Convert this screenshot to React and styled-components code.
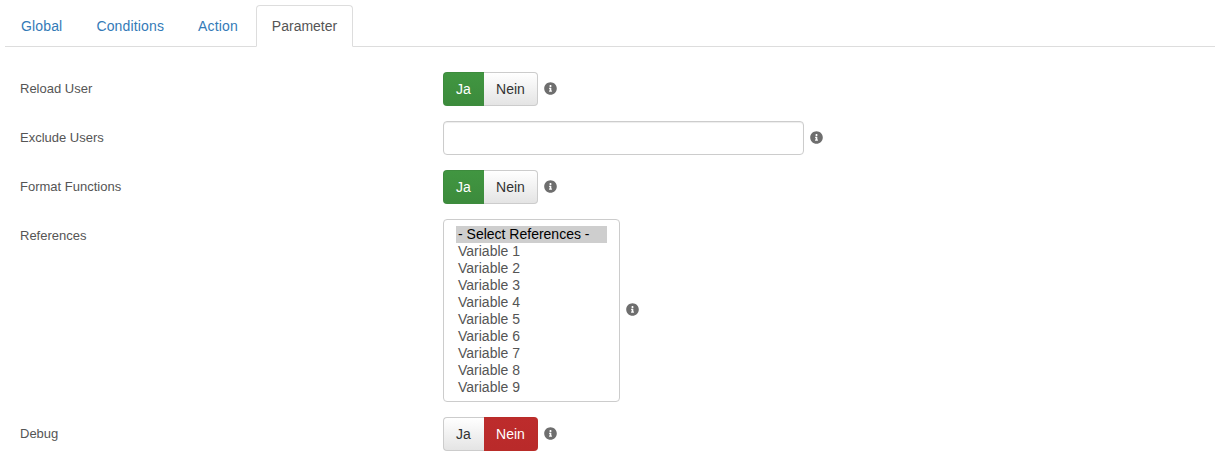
import React from "react";
import styled, { createGlobalStyle } from "styled-components";
import { FaInfoCircle } from "react-icons/fa";

const GlobalStyle = createGlobalStyle`
  body {
    margin: 0;
    background: #fff;
    font-family: "Liberation Sans", Arial, sans-serif;
    font-size: 14px;
    color: #555;
  }
`;

const Page = styled.div`
  padding-top: 5px;
`;

const Tabs = styled.ul`
  display: flex;
  gap: 2px;
  list-style: none;
  margin: 0 0 25px 5px;
  padding: 0;
  height: 41px;
  border-bottom: 1px solid #ddd;
`;

const Tab = styled.li`
  box-sizing: border-box;
  height: 42px;
  padding: 0 15px;
  line-height: 40px;
  letter-spacing: ${(p) => (p.$active ? "0" : "0.15px")};
  border: 1px solid ${(p) => (p.$active ? "#ddd" : "transparent")};
  border-bottom-color: ${(p) => (p.$active ? "#fff" : "transparent")};
  border-radius: 4px 4px 0 0;
  background: ${(p) => (p.$active ? "#fff" : "transparent")};
  color: ${(p) => (p.$active ? "#555" : "#337ab7")};
`;

const Form = styled.div`
  display: flex;
  flex-direction: column;
  gap: 15px;
  padding-left: 20px;
`;

const Row = styled.div`
  display: grid;
  grid-template-columns: 423px 1fr;
`;

const Label = styled.label`
  font-size: 13px;
  line-height: 33px;
  color: #555;
`;

const Control = styled.div`
  display: flex;
  align-items: center;
  gap: 6px;
`;

const Toggle = styled.div`
  display: flex;
  height: 34px;
`;

const colours = {
  green: "background: linear-gradient(#419641, #3c8b3c); border-color: #3d8b3d; color: #fff;",
  red: "background: linear-gradient(#bd2c2c, #b92a2a); border-color: #b92c28; color: #fff;",
  off: "background: linear-gradient(#fff, #e4e4e4); border-color: #ccc; color: #333;",
};

const ToggleButton = styled.div`
  box-sizing: border-box;
  display: flex;
  align-items: center;
  justify-content: center;
  width: ${(p) => p.$width}px;
  border: 1px solid;
  ${(p) => colours[p.$tone]}
  &:first-child {
    border-radius: 4px 0 0 4px;
    border-right-width: 0;
    padding-right: 1px;
  }
  &:last-child {
    border-radius: 0 4px 4px 0;
    border-left-width: 0;
  }
`;

const TextInput = styled.input`
  box-sizing: border-box;
  width: 361px;
  height: 34px;
  margin: 0;
  padding: 6px 12px;
  border: 1px solid #ccc;
  border-radius: 4px;
  box-shadow: inset 0 1px 1px rgba(0, 0, 0, 0.075);
  outline: none;
`;

const MultiSelect = styled.select`
  box-sizing: border-box;
  width: 177px;
  height: 183px;
  margin: 0;
  padding: 6px 12px;
  border: 1px solid #ccc;
  border-radius: 4px;
  background: #fff;
  color: #555;
  font-family: "Liberation Sans", Arial, sans-serif;
  font-size: 14px;
  overflow: hidden;
  outline: none;

  option {
    box-sizing: border-box;
    height: 17px;
    min-height: 17px;
    line-height: 16px;
    padding: 0 2px;
  }

  option:checked {
    background: linear-gradient(#cecece, #cecece);
    color: #000;
  }
`;

const Info = styled(FaInfoCircle)`
  width: 13px;
  height: 13px;
  margin-bottom: 2px;
  color: #6e6e6e;
`;

const YesNo = ({ value }) => (
  <Toggle>
    <ToggleButton $width={41} $tone={value ? "green" : "off"}>Ja</ToggleButton>
    <ToggleButton $width={54} $tone={value ? "off" : "red"}>Nein</ToggleButton>
  </Toggle>
);

const variables = [1, 2, 3, 4, 5, 6, 7, 8, 9];

export default function App() {
  return (
    <Page>
      <GlobalStyle />
      <Tabs>
        <Tab>Global</Tab>
        <Tab>Conditions</Tab>
        <Tab>Action</Tab>
        <Tab $active>Parameter</Tab>
      </Tabs>
      <Form>
        <Row>
          <Label>Reload User</Label>
          <Control>
            <YesNo value />
            <Info />
          </Control>
        </Row>
        <Row>
          <Label>Exclude Users</Label>
          <Control>
            <TextInput type="text" />
            <Info />
          </Control>
        </Row>
        <Row>
          <Label>Format Functions</Label>
          <Control>
            <YesNo value />
            <Info />
          </Control>
        </Row>
        <Row>
          <Label>References</Label>
          <Control>
            <MultiSelect multiple defaultValue={["none"]}>
              <option value="none">- Select References -</option>
              {variables.map((n) => (
                <option key={n} value={n}>Variable {n}</option>
              ))}
            </MultiSelect>
            <Info />
          </Control>
        </Row>
        <Row>
          <Label>Debug</Label>
          <Control>
            <YesNo value={false} />
            <Info />
          </Control>
        </Row>
      </Form>
    </Page>
  );
}
